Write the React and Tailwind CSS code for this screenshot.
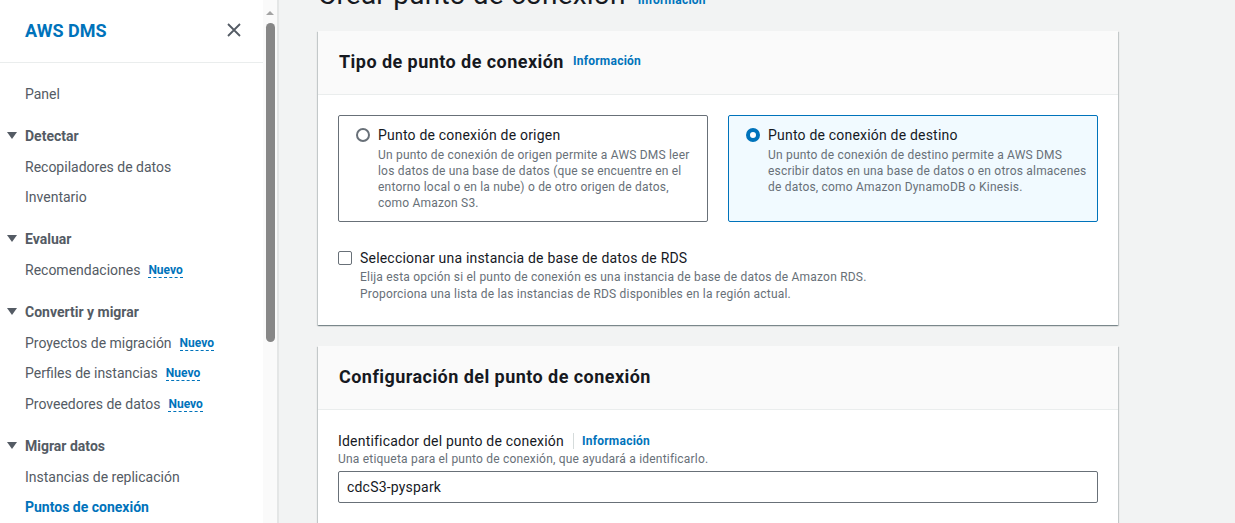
import React from "react";

const Nuevo = () => (
  <span className="ml-2 text-[12px] font-bold text-[#0073bb] border-b border-dashed border-[#0073bb] leading-[14px]">Nuevo</span>
);

const Item = ({ children, badge, active, mt = "" }) => (
  <div className={`h-[30px] flex items-center pl-[25px] text-[14px] ${active ? "font-bold text-[#0073bb]" : "text-[#545b64]"} ${mt}`}>
    <span>{children}</span>
    {badge && <Nuevo />}
  </div>
);

const Heading = ({ children }) => (
  <div className="h-[30px] mt-[12px] flex items-center text-[14px] font-bold text-[#545b64]">
    <svg width="25" height="30" viewBox="0 0 25 30" className="shrink-0">
      <path d="M7 11 L17 11 L12 18 Z" fill="#545b64" />
    </svg>
    <span>{children}</span>
  </div>
);

const Info = ({ className = "" }) => (
  <span className={`text-[12px] font-bold text-[#0073bb] tracking-[0.25px] ${className}`}>Información</span>
);

const cardShadow =
  "shadow-[0_1px_1px_0_rgba(0,28,36,0.3),1px_1px_1px_0_rgba(0,28,36,0.15),-1px_1px_1px_0_rgba(0,28,36,0.15)]";

export default function App() {
  return (
    <div className="flex h-[523px] w-[1235px] overflow-hidden bg-[#f2f3f3]" style={{ fontFamily: "Roboto, 'Liberation Sans', sans-serif" }}>
      {/* Sidebar */}
      <div className="w-[263px] shrink-0 bg-white">
        <div className="h-[63px] border-b border-[#eaeded] flex items-center justify-between pl-[25px] pr-[21px] pb-[2px]">
          <span className="text-[18px] font-bold text-[#0073bb]">AWS DMS</span>
          <svg width="16" height="16" viewBox="0 0 16 16">
            <path d="M2 2 L14 14 M14 2 L2 14" stroke="#545b64" strokeWidth="1.8" />
          </svg>
        </div>
        <div className="pt-[16px]">
          <Item>Panel</Item>
          <Heading>Detectar</Heading>
          <Item mt="mt-[1px]">Recopiladores de datos</Item>
          <Item>Inventario</Item>
          <Heading>Evaluar</Heading>
          <Item mt="mt-[1px]" badge>Recomendaciones</Item>
          <Heading>Convertir y migrar</Heading>
          <Item mt="mt-[1px]" badge>Proyectos de migración</Item>
          <Item badge>Perfiles de instancias</Item>
          <Item mt="mt-[1px]" badge>Proveedores de datos</Item>
          <Heading>Migrar datos</Heading>
          <Item mt="mt-[1px]">Instancias de replicación</Item>
          <Item active>Puntos de conexión</Item>
        </div>
      </div>

      {/* Scrollbar */}
      <div className="w-[16px] shrink-0 bg-[#fafafa] border-r-2 border-[#e4e6e6] flex flex-col items-center">
        <svg width="10" height="6" viewBox="0 0 10 6" className="mt-[10px]">
          <path d="M1 5 L5 1 L9 5 Z" fill="#a3a3a3" />
        </svg>
        <div className="mt-[7px] w-[9px] h-[319px] rounded-full bg-[#878787]" />
      </div>

      {/* Main */}
      <div className="flex-1 pl-[39px] tracking-[0.2px]">
        <div className="-mt-[23px] h-[36px] flex items-baseline leading-[36px]">
          <span className="text-[28px] text-[#16191f]">Crear punto de conexión</span>
          <Info className="ml-[12px]" />
        </div>

        {/* Card 1 */}
        <div className={`mt-[18px] w-[800px] bg-white ${cardShadow}`}>
          <div className="h-[64px] bg-[#fafafa] border-b border-[#eaeded] flex items-center pl-[21px] pb-[3px]">
            <span className="text-[18px] font-bold text-[#16191f] tracking-[0.45px]">Tipo de punto de conexión</span>
            <Info className="ml-[9px]" />
          </div>
          <div className="px-[20px] pt-[20px] pb-[22px]">
            <div className="grid grid-cols-2 gap-[20px]">
              <div className="h-[107px] border border-[#687078] rounded-[2px] pl-[17px] pt-[9px]">
                <div className="flex items-center h-[20px]">
                  <span className="w-[14px] h-[14px] rounded-full border-2 border-[#687078] shrink-0" />
                  <span className="ml-[8px] text-[14px] text-[#16191f]">Punto de conexión de origen</span>
                </div>
                <p className="ml-[22px] mt-[2px] text-[12px] leading-[16px] text-[#687078] whitespace-nowrap">
                  <span className="block">Un punto de conexión de origen permite a AWS DMS leer</span>
                  <span className="block">los datos de una base de datos (que se encuentre en el</span>
                  <span className="block">entorno local o en la nube) o de otro origen de datos,</span>
                  <span className="block">como Amazon S3.</span>
                </p>
              </div>
              <div className="h-[107px] border border-[#0073bb] bg-[#f1faff] rounded-[2px] pl-[17px] pt-[9px]">
                <div className="flex items-center h-[20px]">
                  <span className="w-[14px] h-[14px] rounded-full border-[4px] border-[#0073bb] bg-white shrink-0" />
                  <span className="ml-[8px] text-[14px] text-[#16191f]">Punto de conexión de destino</span>
                </div>
                <p className="ml-[22px] mt-[2px] text-[12px] leading-[16px] text-[#687078] whitespace-nowrap">
                  <span className="block">Un punto de conexión de destino permite a AWS DMS</span>
                  <span className="block">escribir datos en una base de datos o en otros almacenes</span>
                  <span className="block">de datos, como Amazon DynamoDB o Kinesis.</span>
                </p>
              </div>
            </div>
            <div className="mt-[26px]">
              <div className="flex items-center h-[20px]">
                <span className="w-[14px] h-[14px] rounded-[2px] border-[1.5px] border-[#687078] shrink-0" />
                <span className="ml-[8px] text-[14px] text-[#16191f]">Seleccionar una instancia de base de datos de RDS</span>
              </div>
              <p className="ml-[22px] mt-[1px] text-[12px] leading-[17px] text-[#687078]">
                Elija esta opción si el punto de conexión es una instancia de base de datos de Amazon RDS.<br />
                Proporciona una lista de las instancias de RDS disponibles en la región actual.
              </p>
            </div>
          </div>
        </div>

        {/* Card 2 */}
        <div className={`mt-[21px] w-[800px] bg-white h-[300px] ${cardShadow}`}>
          <div className="h-[64px] bg-[#fafafa] border-b border-[#eaeded] flex items-center pl-[21px] pb-[3px]">
            <span className="text-[18px] font-bold text-[#16191f] tracking-[0.45px]">Configuración del punto de conexión</span>
          </div>
          <div className="px-[20px] pt-[21px]">
            <div className="flex items-center h-[20px]">
              <span className="text-[14px] text-[#16191f]">Identificador del punto de conexión</span>
              <span className="ml-[9px] w-px h-[16px] bg-[#d5dbdb]" />
              <Info className="ml-[8px]" />
            </div>
            <div className="text-[12px] leading-[16px] text-[#687078]">Una etiqueta para el punto de conexión, que ayudará a identificarlo.</div>
            <div className="mt-[4px] h-[32px] border border-[#687078] rounded-[2px] flex items-center pl-[8px] text-[14px] text-[#16191f]">cdcS3-pyspark</div>
          </div>
        </div>
      </div>
    </div>
  );
}
